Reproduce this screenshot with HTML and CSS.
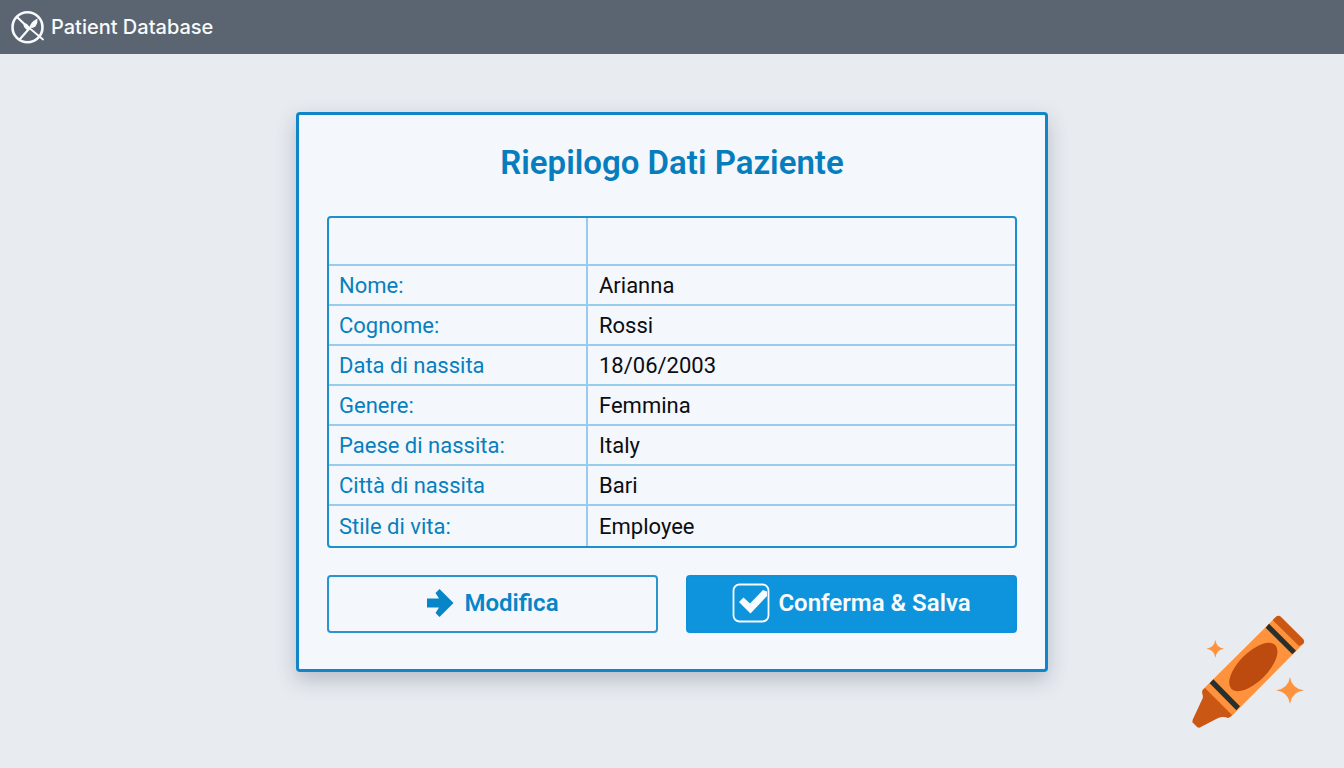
FILE: index.html
```html
<!DOCTYPE html>
<html lang="it">
<head>
<meta charset="utf-8">
<meta name="viewport" content="width=device-width, initial-scale=1">
<title>Patient Database</title>
<link rel="stylesheet" href="styles.css">
</head>
<body>
<header class="topbar">
  <svg class="logo" viewBox="0 0 34 34" aria-hidden="true">
    <circle cx="16.500" cy="17.300" r="15" fill="none" stroke="currentColor" stroke-width="2.600"/>
    <path d="M6 7L16.500 17M21.500 15L8.500 29.500" fill="none" stroke="currentColor" stroke-width="2.200" stroke-linecap="round"/>
    <path d="M16 16L32 29.500" fill="none" stroke="currentColor" stroke-width="1.800" stroke-linecap="round"/>
    <path d="M12 12.500L16 14L18.500 17L18.500 20L16 20L13 17Z M26.500 8.500Q27 13 24.500 16.500L21.500 18L19 15.500Q21 11 26.500 8.500Z" fill="currentColor"/>
  </svg>
  <span class="brand">Patient Database</span>
</header>
<main class="page">
  <section class="card" aria-labelledby="summary-title">
    <h1 class="title" id="summary-title">Riepilogo Dati Paziente</h1>
    <table class="data">
      <thead><tr><td></td><td></td></tr></thead>
      <tbody>
        <tr><th scope="row">Nome:</th><td>Arianna</td></tr>
        <tr><th scope="row">Cognome:</th><td>Rossi</td></tr>
        <tr><th scope="row">Data di nassita</th><td>18/06/2003</td></tr>
        <tr><th scope="row">Genere:</th><td>Femmina</td></tr>
        <tr><th scope="row">Paese di nassita:</th><td>Italy</td></tr>
        <tr><th scope="row">Città di nassita</th><td>Bari</td></tr>
        <tr><th scope="row">Stile di vita:</th><td>Employee</td></tr>
      </tbody>
    </table>
    <div class="actions">
      <button class="btn" type="button">
        <svg class="arrow" viewBox="0 0 28 28" aria-hidden="true"><path d="M1 9.500H13L9.500 4L13.500 0L27.500 14L13.500 28L9.500 24L13 18.500H1Z" fill="currentColor"/></svg>
        Modifica
      </button>
      <button class="btn btn-primary" type="button">
        <svg class="check" viewBox="0 0 38 40" aria-hidden="true"><rect x="1.500" y="1.500" width="35" height="37" rx="6" fill="none" stroke="currentColor" stroke-width="1.800"/><path d="M7 19L11.500 14.500L18 20.500L31 7L35 8.500V13L18.500 30.500Z" fill="currentColor"/></svg>
        Conferma &amp; Salva
      </button>
    </div>
  </section>
</main>
<svg class="crayon" viewBox="60 42 348 348" aria-hidden="true">
  <path d="M97 270L317 52Q324 44 332 50L400 118Q405 125 399 132L182 351Z" fill="#ff923c"/>
  <path d="M315 53Q324 43 333 51L399 117Q406 125 399 132L387 138L308 60Z" fill="#cb5714"/>
  <path d="M297 71L378 152L367 163L287 83Z M130 238L210 319L199 331L119 250Z" fill="#28302e"/>
  <path d="M105 264L186 345L179 352Q174 356 168 352Q155 349 143 355L88 383L82 382L67 367L68 359L98 295Q100 288 97 281Q94 274 99 269Z" fill="#cb5714"/>
  <ellipse cx="250" cy="201" rx="93" ry="43" transform="rotate(-45 250 201)" fill="#bd4b10"/>
  <path d="M136 119Q139 143 162 146Q139 149 136 173Q133 149 109 146Q133 143 136 119Z M360 231Q365 266 402 271Q365 276 360 311Q355 276 318 271Q355 266 360 231Z" fill="#ff923c"/>
</svg>
</body>
</html>
```
FILE: styles.css
```css
* {
  box-sizing: border-box;
}

body {
  margin: 0;
  min-height: 100vh;
  background: #e8ebf0;
  font-family: Roboto, "Liberation Sans", sans-serif;
  color: #0c0d10;
}

.topbar {
  display: flex;
  align-items: center;
  gap: 6px;
  padding: 10px 11px;
  background: #5b6572;
  color: #f8fafc;
}

.logo {
  width: 34px;
  height: 34px;
}

.brand {
  font-family: Inter, Roboto, sans-serif;
  font-size: 20px;
  font-weight: 500;
  line-height: 32px;
}

.page {
  display: flex;
  justify-content: center;
  padding: 58px 24px;
}

.card {
  width: 100%;
  max-width: 752px;
  padding: 28px 28px 36px;
  border: 3px solid #1086c8;
  border-radius: 4px;
  background: #f4f7fb;
  box-shadow: 0 8px 20px rgba(70, 80, 105, 0.3);
}

.title {
  margin: 0 0 33px;
  font-size: 33px;
  line-height: 40px;
  font-weight: 600;
  text-align: center;
  color: #067dbd;
}

.data {
  width: 100%;
  border: 2px solid #1d8fcb;
  border-radius: 4px;
  border-spacing: 0;
  table-layout: fixed;
  font-size: 22px;
  line-height: 26px;
}

.data th,
.data td {
  height: 40px;
  padding: 2px 11px 0;
  border-bottom: 2px solid #96cdec;
  text-align: left;
  font-weight: 400;
}

.data th {
  padding: 2px 10px 0;
  color: #077fbe;
}

.data thead td {
  height: 48px;
}

.data tr > :first-child {
  width: 259px;
  border-right: 2px solid #96cdec;
}

.data tbody tr:last-child > * {
  border-bottom: 0;
}

.actions {
  display: grid;
  grid-template-columns: 1fr 1fr;
  gap: 28px;
  margin-top: 27px;
}

.btn {
  display: flex;
  align-items: center;
  justify-content: center;
  gap: 10px;
  height: 58px;
  padding: 0 16px 2px;
  border: 2px solid #2994cd;
  border-radius: 4px;
  background: transparent;
  color: #0785c9;
  font-family: inherit;
  font-size: 24px;
  font-weight: 600;
  cursor: pointer;
}

.btn-primary {
  gap: 8px;
  border-color: #0d91d8;
  background: #0d94dc;
  color: #f8fcff;
}

.arrow {
  width: 28px;
  height: 28px;
}

.check {
  width: 38px;
  height: 40px;
}

.crayon {
  position: fixed;
  right: 38px;
  bottom: 38px;
  width: 116px;
  height: 116px;
}
```
